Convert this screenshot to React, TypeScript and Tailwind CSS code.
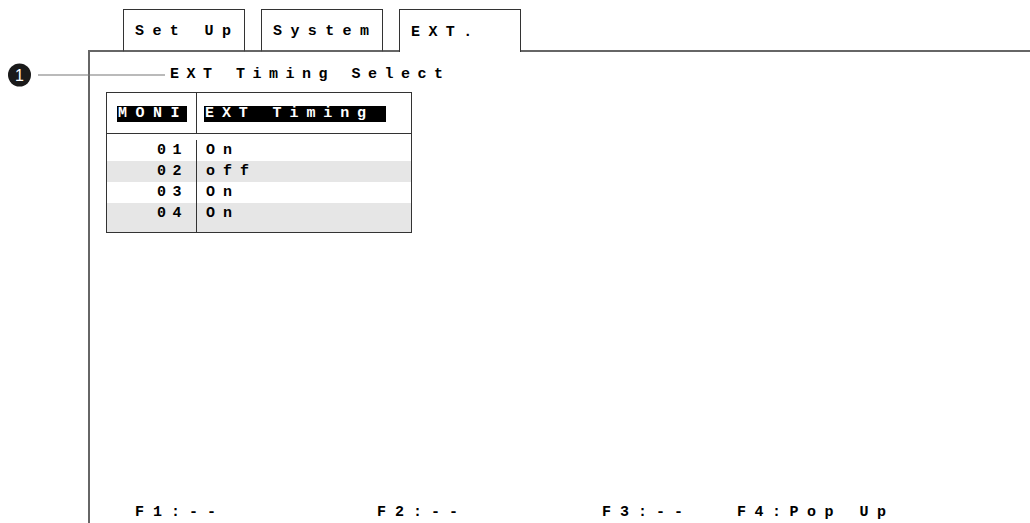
import React from "react";

const Tab = ({ label, active }: { label: string; active?: boolean }) => (
  <div
    className={
      "w-[122px] self-stretch border-t border-l border-r border-[#333] flex items-center pl-[11px] pt-[5px] text-[15px] tracking-[8.4px] " +
      (active ? "border-b-0" : "border-b-2 border-b-[#666]")
    }
  >
    {label}
  </div>
);

const rows = [
  { n: "01", v: "On" },
  { n: "02", v: "off" },
  { n: "03", v: "On" },
  { n: "04", v: "On" },
];

export default function App() {
  return (
    <div className="w-[1030px] h-[523px] bg-white text-black overflow-hidden flex flex-col font-['Liberation_Mono',monospace] font-bold">
      {/* Tabs */}
      <div className="flex h-[52px] pt-[9px] shrink-0">
        <div className="w-[88px]" />
        <div className="w-[35px] self-stretch border-b-2 border-[#666]" />
        <Tab label="Set Up" />
        <div className="w-[16px] self-stretch border-b-2 border-[#666]" />
        <Tab label="System" />
        <div className="w-[16px] self-stretch border-b-2 border-[#666]" />
        <Tab label="EXT." active />
        <div className="flex-1 self-stretch border-b-2 border-[#666]" />
      </div>

      {/* Panel */}
      <div className="flex-1 flex">
        <div className="w-[88px] shrink-0" />
        <div className="flex-1 border-l-2 border-[#666] flex flex-col">
          {/* Title with callout */}
          <div className="relative mt-[15px] ml-[80px] h-[16px] flex items-center text-[15px] tracking-[7.5px] leading-[16px]">
            <div className="absolute right-full top-1/2 -translate-y-1/2 flex items-center">
              <div className="w-[23px] h-[23px] rounded-full bg-[#1a1a1a] text-white flex items-center justify-center font-['Liberation_Sans',sans-serif] font-normal text-[16px] tracking-normal">
                1
              </div>
              <div className="ml-[7px] w-[127px] h-[1px] bg-[#777]" />
              <div className="w-[5px]" />
            </div>
            <span>EXT Timing Select</span>
          </div>

          {/* Table */}
          <div className="mt-[9px] ml-[16px] w-[306px] h-[141px] border border-[#333] flex flex-col text-[15px]">
            <div className="h-[41px] flex border-b border-[#333]">
              <div className="w-[90px] border-r border-[#333] flex items-center pl-[10px] pt-[2px]">
                <div className="bg-black text-white h-[16px] w-[70px] flex items-center pl-[1px] tracking-[8.5px] leading-[16px]">
                  MONI
                </div>
              </div>
              <div className="flex-1 flex items-center pl-[7px] pt-[2px]">
                <div className="bg-black text-white h-[16px] w-[182px] flex items-center pl-[1px] tracking-[7.9px] leading-[16px]">
                  EXT Timing
                </div>
              </div>
            </div>
            <div className="flex-1 flex flex-col">
              {rows.map((r, i) => (
                <div
                  key={r.n}
                  className={
                    "flex " +
                    (i % 2 === 1 ? "bg-[#e6e6e6] " : "bg-white ") +
                    (i === 0 ? "pt-[6px] " : "") +
                    (i === 3 ? "flex-1 " : "")
                  }
                >
                  <div className="w-[90px] border-r border-[#333] flex justify-end pr-[8px] h-full">
                    <span className="h-[21px] leading-[22px] tracking-[6.5px]">{r.n}</span>
                  </div>
                  <div className="flex-1 pl-[9px] h-[21px] leading-[22px] tracking-[8px]">{r.v}</div>
                </div>
              ))}
            </div>
          </div>

          <div className="flex-1" />

          {/* Footer */}
          <div className="h-[16px] mb-[2px] ml-[45px] flex items-center text-[15px] tracking-[9px] leading-[16px]">
            <div className="w-[242px]">F1:--</div>
            <div className="w-[225px]">F2:--</div>
            <div className="w-[135px]">F3:--</div>
            <div className="tracking-[8.5px]">F4:Pop Up</div>
          </div>
        </div>
      </div>
    </div>
  );
}
